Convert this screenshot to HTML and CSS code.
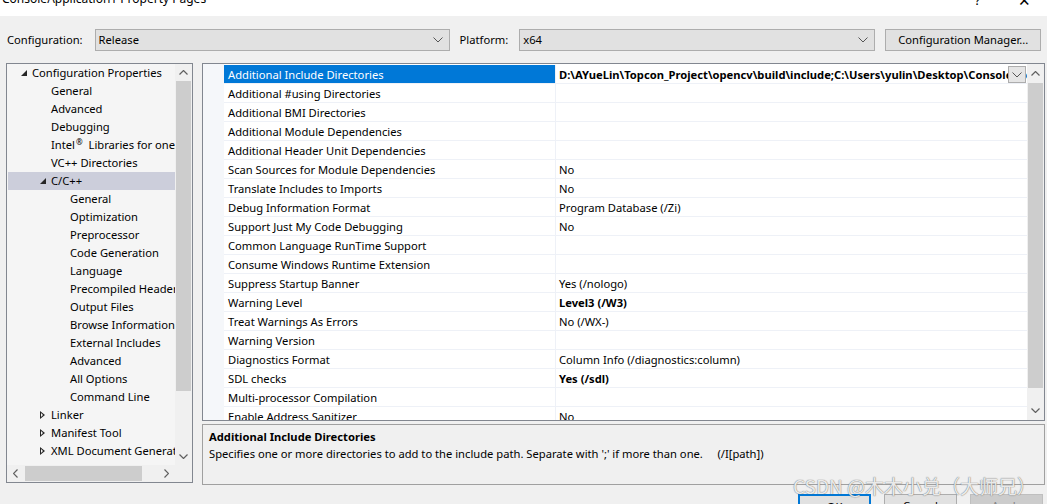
FILE: index.html
```html
<!DOCTYPE html>
<html>
<head>
<meta charset="utf-8">
<link rel="stylesheet" href="styles.css">
</head>
<body>
<div class="window">
  <div class="titlebar">
    <span class="title">ConsoleApplication1 Property Pages</span>
    <span class="tb-btns"><span class="tb-help">?</span><span class="tb-close">✕</span></span>
  </div>
  <div class="toolbar">
    <span class="lbl">Configuration:</span>
    <div class="combo combo-config"><span>Release</span><svg class="chev" viewBox="0 0 10 6" width="10" height="6"><path d="M0.5 0.5 L5 5 L9.5 0.5" fill="none" stroke="#555" stroke-width="1"/></svg></div>
    <span class="lbl lbl-plat">Platform:</span>
    <div class="combo combo-plat"><span>x64</span><svg class="chev" viewBox="0 0 10 6" width="10" height="6"><path d="M0.5 0.5 L5 5 L9.5 0.5" fill="none" stroke="#555" stroke-width="1"/></svg></div>
    <div class="btn btn-mgr">Configuration Manager...</div>
  </div>
  <div class="main">
    <div class="tree">
      <div class="tree-body">
        <div class="tree-items">
          <div class="ti l0"><span class="exp open"></span>Configuration Properties</div>
          <div class="ti l1">General</div>
          <div class="ti l1">Advanced</div>
          <div class="ti l1">Debugging</div>
          <div class="ti l1">Intel<sup>®</sup> Libraries for oneAPI</div>
          <div class="ti l1">VC++ Directories</div>
          <div class="ti l1 sel"><span class="exp open"></span>C/C++</div>
          <div class="ti l2">General</div>
          <div class="ti l2">Optimization</div>
          <div class="ti l2">Preprocessor</div>
          <div class="ti l2">Code Generation</div>
          <div class="ti l2">Language</div>
          <div class="ti l2">Precompiled Headers</div>
          <div class="ti l2">Output Files</div>
          <div class="ti l2">Browse Information</div>
          <div class="ti l2">External Includes</div>
          <div class="ti l2">Advanced</div>
          <div class="ti l2">All Options</div>
          <div class="ti l2">Command Line</div>
          <div class="ti l1"><span class="exp closed"></span>Linker</div>
          <div class="ti l1"><span class="exp closed"></span>Manifest Tool</div>
          <div class="ti l1"><span class="exp closed"></span>XML Document Generator</div>
        </div>
        <div class="vscroll tree-vs">
          <svg class="arr" viewBox="0 0 9 5" width="9" height="5"><path d="M0.5 4.5 L4.5 0.5 L8.5 4.5" fill="none" stroke="#606060" stroke-width="1.2"/></svg>
          <div class="vtrack"><div class="vthumb tree-thumb"></div></div>
          <svg class="arr" viewBox="0 0 9 5" width="9" height="5"><path d="M0.5 0.5 L4.5 4.5 L8.5 0.5" fill="none" stroke="#606060" stroke-width="1.2"/></svg>
        </div>
      </div>
      <div class="hscroll">
        <svg class="harr" viewBox="0 0 5 9" width="5" height="9"><path d="M4.5 0.5 L0.5 4.5 L4.5 8.5" fill="none" stroke="#606060" stroke-width="1.2"/></svg>
        <div class="htrack"><div class="hthumb"></div></div>
        <svg class="harr" viewBox="0 0 5 9" width="5" height="9"><path d="M0.5 0.5 L4.5 4.5 L0.5 8.5" fill="none" stroke="#606060" stroke-width="1.2"/></svg>
        <div class="corner"></div>
      </div>
    </div>
    <div class="right">
      <div class="grid">
        <div class="gutter"></div>
        <div class="rows">
          <div class="row selrow"><div class="name">Additional Include Directories</div><div class="val bold">D:\AYueLin\Topcon_Project\opencv\build\include;C:\Users\yulin\Desktop\ConsoleApplication1\include</div><div class="ddbtn"><svg viewBox="0 0 10 6" width="10" height="6"><path d="M0.5 0.5 L5 5 L9.5 0.5" fill="none" stroke="#555" stroke-width="1"/></svg></div></div>
          <div class="row"><div class="name">Additional #using Directories</div><div class="val"></div></div>
          <div class="row"><div class="name">Additional BMI Directories</div><div class="val"></div></div>
          <div class="row"><div class="name">Additional Module Dependencies</div><div class="val"></div></div>
          <div class="row"><div class="name">Additional Header Unit Dependencies</div><div class="val"></div></div>
          <div class="row"><div class="name">Scan Sources for Module Dependencies</div><div class="val">No</div></div>
          <div class="row"><div class="name">Translate Includes to Imports</div><div class="val">No</div></div>
          <div class="row"><div class="name">Debug Information Format</div><div class="val">Program Database (/Zi)</div></div>
          <div class="row"><div class="name">Support Just My Code Debugging</div><div class="val">No</div></div>
          <div class="row"><div class="name">Common Language RunTime Support</div><div class="val"></div></div>
          <div class="row"><div class="name">Consume Windows Runtime Extension</div><div class="val"></div></div>
          <div class="row"><div class="name">Suppress Startup Banner</div><div class="val">Yes (/nologo)</div></div>
          <div class="row"><div class="name">Warning Level</div><div class="val bold">Level3 (/W3)</div></div>
          <div class="row"><div class="name">Treat Warnings As Errors</div><div class="val">No (/WX-)</div></div>
          <div class="row"><div class="name">Warning Version</div><div class="val"></div></div>
          <div class="row"><div class="name">Diagnostics Format</div><div class="val">Column Info (/diagnostics:column)</div></div>
          <div class="row"><div class="name">SDL checks</div><div class="val bold">Yes (/sdl)</div></div>
          <div class="row"><div class="name">Multi-processor Compilation</div><div class="val"></div></div>
          <div class="row"><div class="name">Enable Address Sanitizer</div><div class="val">No</div></div>
        </div>
        <div class="vscroll grid-vs">
          <svg class="arr" viewBox="0 0 9 5" width="9" height="5"><path d="M0.5 4.5 L4.5 0.5 L8.5 4.5" fill="none" stroke="#606060" stroke-width="1.2"/></svg>
          <div class="vtrack"><div class="vthumb grid-thumb"></div></div>
          <svg class="arr" viewBox="0 0 9 5" width="9" height="5"><path d="M0.5 0.5 L4.5 4.5 L8.5 0.5" fill="none" stroke="#606060" stroke-width="1.2"/></svg>
        </div>
      </div>
      <div class="desc">
        <div class="desc-title">Additional Include Directories</div>
        <div class="desc-text">Specifies one or more directories to add to the include path. Separate with ';' if more than one.&nbsp;&nbsp;&nbsp;&nbsp;&nbsp;(/I[path])</div>
      </div>
      <div class="buttons">
        <div class="btn dlg ok">OK</div>
        <div class="btn dlg">Cancel</div>
        <div class="btn dlg disabled">Apply</div>
      </div>
    </div>
  </div>
  <div class="watermark">CSDN @木木小兑（大师兄）</div>
</div>
</body>
</html>
```
FILE: styles.css
```css
* { box-sizing: border-box; }
html, body { margin: 0; padding: 0; }
body {
  width: 1047px; height: 504px; overflow: hidden;
  background: #f0f0f0;
  font-family: "Noto Sans", "Noto Sans CJK SC", sans-serif;
  font-size: 11.2px;
  color: #000;
}
.window { position: relative; width: 1047px; height: 504px; overflow: hidden; }
.titlebar {
  height: 16px; background: #fff; overflow: hidden;
  display: flex; justify-content: space-between; align-items: flex-end;
}
.title { font-size: 12px; line-height: 16px; margin-bottom: 9px; padding-left: 2px; }
.tb-btns { display: flex; margin-bottom: 8px; }
.tb-help { font-size: 13px; line-height: 16px; width: 45px; text-align: center; margin-right: 2px; }
.tb-close { font-size: 15px; line-height: 16px; width: 45px; text-align: center; margin-bottom: -2px; }
.toolbar {
  height: 47px; display: flex; align-items: center; padding: 0 5px 0 7px;
}
.lbl { white-space: nowrap; }
.combo {
  height: 22px; background: #e1e1e1; border: 1px solid #adadad;
  display: flex; align-items: center; justify-content: space-between;
  padding: 0 6px 0 3px; flex: none;
}
.combo-config { width: 355px; margin-left: 12px; }
.lbl-plat { margin-left: 10px; }
.combo-plat { width: 356px; margin-left: 11px; }
.btn {
  height: 22px; background: #e1e1e1; border: 1px solid #adadad;
  display: flex; align-items: center; justify-content: center; flex: none;
}
.btn-mgr { width: 156px; margin-left: 10px; }
.main { display: flex; padding-left: 6px; height: 441px; }
.tree {
  width: 187px; height: 420px; border: 1px solid #828790; background: #f5f5f5;
  display: flex; flex-direction: column; flex: none;
}
.tree-body { flex: 1; display: flex; min-height: 0; }
.tree-items { flex: 1; overflow: hidden; padding-left: 1px; }
.ti { height: 18px; line-height: 18px; white-space: nowrap; position: relative; overflow: hidden; }
.ti sup { font-size: 8px; line-height: 0; vertical-align: 4px; margin: 0 3px 0 1px; }
.l0 { padding-left: 24px; }
.l1 { padding-left: 43px; }
.l2 { padding-left: 62px; }
.sel { background: #cccedb; }
.exp { position: absolute; top: 0; width: 12px; height: 18px; }
.l0 .exp { left: 10px; }
.l1 .exp { left: 29px; }
.exp.open::before {
  content: ""; position: absolute; left: 3px; top: 6px;
  border-style: solid; border-width: 0 0 6px 6px; border-color: transparent transparent #262626 transparent;
}
.exp.closed::before {
  content: ""; position: absolute; left: 3px; top: 5px;
  width: 0; height: 0;
  border-style: solid; border-width: 4px 0 4px 5px; border-color: transparent transparent transparent #262626;
}
.exp.closed::after {
  content: ""; position: absolute; left: 4px; top: 7px;
  border-style: solid; border-width: 2px 0 2px 2.5px; border-color: transparent transparent transparent #f5f5f5;
}
.vscroll {
  width: 17px; background: #f0f0f0; display: flex; flex-direction: column; align-items: center; flex: none;
}
.vscroll .arr { margin: 6px 0; flex: none; }
.vtrack { flex: 1; width: 100%; position: relative; }
.vthumb { position: absolute; left: 1px; right: 1px; background: #cdcdcd; }
.tree-thumb { top: 0; height: 310px; }
.hscroll { height: 17px; display: flex; align-items: center; background: #f0f0f0; flex: none; }
.harr { margin: 0 6px; flex: none; }
.htrack { flex: 1; height: 100%; position: relative; }
.hthumb { position: absolute; left: 1px; width: 117px; top: 1px; bottom: 1px; background: #cdcdcd; }
.corner { width: 17px; height: 17px; background: #f0f0f0; }
.right { margin-left: 9px; width: 843px; display: flex; flex-direction: column; flex: none; }
.grid {
  height: 358px; border: 1px solid #828790; background: #fff; display: flex; overflow: hidden; flex: none;
}
.gutter { width: 21px; background: #f5f7fa; flex: none; }
.rows { flex: 1; overflow: hidden; padding-top: 1px; }
.row { height: 19px; display: flex; border-bottom: 1px solid #eef1f7; position: relative; }
.name { width: 332px; padding-left: 4px; padding-top: 1px; line-height: 17px; border-right: 1px solid #eef1f7; white-space: nowrap; overflow: hidden; flex: none; }
.val { flex: 1; padding-left: 3px; padding-top: 1px; line-height: 17px; white-space: nowrap; overflow: hidden; }
.bold { font-weight: bold; }
.selrow .name { background: #0078d7; color: #fff; }
.selrow .val { padding-right: 18px; }
.ddbtn {
  position: absolute; right: 1px; top: 1px; width: 18px; height: 17px;
  background: #e5e5e5; border: 1px solid #adadad;
  display: flex; align-items: center; justify-content: center;
}
.grid-thumb { top: 0; height: 305px; }
.grid-vs .arr { margin: 7px 0; }
.desc {
  margin-top: 3px; height: 61px; border: 1px solid #a0a0a0; background: #f0f0f0;
  padding: 3px 6px; flex: none;
}
.desc-title { font-weight: bold; line-height: 17px; }
.desc-text { line-height: 18px; }
.buttons { display: flex; justify-content: flex-end; gap: 13px; margin-top: 9px; padding-right: 2px; flex: none; }
.dlg { width: 73px; height: 23px; align-items: flex-start; padding-top: 3px; }
.ok { border: 2px solid #0078d7; }
.disabled { background: #cccccc; border-color: #bfbfbf; color: #838383; }
.watermark {
  position: absolute; left: 793px; top: 474px;
  font-family: "Noto Sans CJK SC", sans-serif; font-size: 19px; line-height: 24px;
  color: rgba(255,255,255,0.85);
  text-shadow: 0 0 1px rgba(110,110,110,0.8), 0 0 1px rgba(110,110,110,0.8);
  white-space: nowrap;
}
```
